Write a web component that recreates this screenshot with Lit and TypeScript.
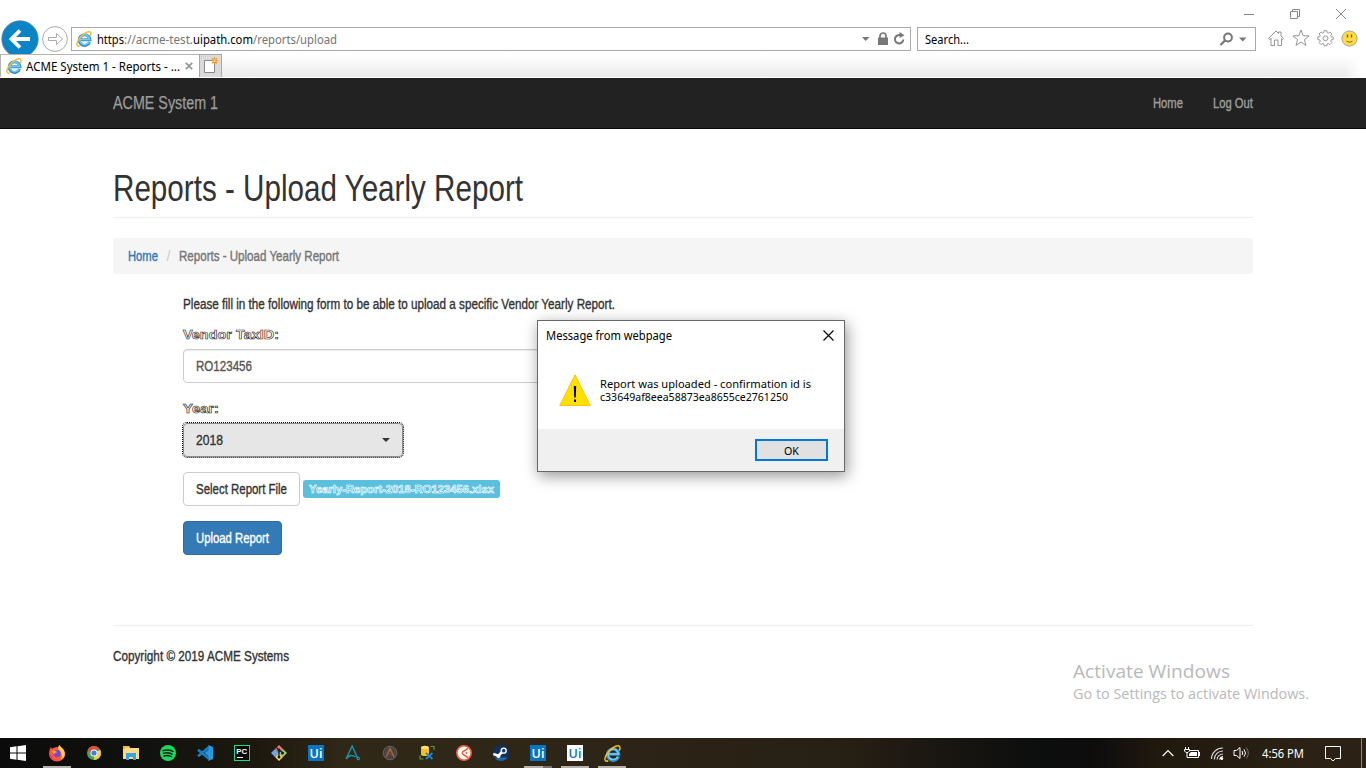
import { LitElement, html, css, svg } from "lit";
import { customElement, property } from "lit/decorators.js";

/** One line of text, squeezed or stretched horizontally to a given width. */
@customElement("fit-text")
class FitText extends LitElement {
  @property({ type: Number }) w = 0;
  static styles = css`
    :host { display: inline-block; white-space: pre; vertical-align: top; }
    .line { display: inline-block; transform-origin: 0 50%; }
  `;
  render() {
    return html`<span class="line"><slot></slot></span>`;
  }
  firstUpdated() {
    const line = this.renderRoot.querySelector(".line") as HTMLElement;
    const natural = line.getBoundingClientRect().width;
    this.style.width = `${this.w}px`;
    if (natural > 0) line.style.transform = `scaleX(${this.w / natural})`;
  }
}

const ieLogo = (size: number) => html`<svg width=${size} height=${size} viewBox="0 0 16 16">
  <path d="M13.600 10.900A5.300 5.300 0 1 1 13.900 8.700H4.500" fill="none" stroke="#2f8fd3" stroke-width="3"/>
  <path d="M13.100 10.900A4.900 4.900 0 1 1 13.600 8.500H4.500" fill="none" stroke="#7accf4" stroke-width="1.500"/>
  <path d="M4 14.800C1.500 16 .2 14.300 1.200 11.500 2.500 7.500 7 2.700 11 1.200c2.500-1 4.200-.4 4 1.800 0 .8-.3 1.600-.7 2.300" fill="none" stroke="#f3bd27" stroke-width="1.400"/>
</svg>`;

const uiLogo = (fg: string, bg: string) => html`<svg class="ui" width="16" height="16" viewBox="0 0 16 16">
  <rect width="16" height="16" fill=${bg}/>
  <text x="8" y="12.700" text-anchor="middle" font-family="Open Sans, sans-serif" font-weight="600" font-size="12.500" fill=${fg}>Ui</text>
</svg>`;

const apps = [
  { on: true, icon: html`<svg width="18" height="18" viewBox="0 0 18 18">
      <path d="M9 3C10 3.500 11 3 11.500 1c1 2 5.500 4 5.500 9a8 7.500 0 0 1-16 0C1 7 2 5 3 3l1 2c1-1 3-2 5-2Z" fill="#ff5a36"/>
      <path d="M11.500 1c.2 2 5 3.500 5.300 8.500a6 6 0 0 1-4 6c2-4 1-7-2-9.500C9.500 4.500 10 2.500 11.500 1Z" fill="#ffd43b"/>
      <path d="M1 9c1 6 5 8 9 7.500-4 0-6-2-6-4Z" fill="#f4276d"/>
      <circle cx="9" cy="9.500" r="3.700" fill="#7a46dd"/><path d="M4 7c2-1 4 0 5 1-1 1.500-3 1-3.500 2.500Z" fill="#ff9a2e"/></svg>` },
  { icon: html`<svg width="16" height="16" viewBox="0 0 16 16"><circle cx="8" cy="8" r="7" fill="#4aa35a"/>
      <path d="M8 8 14.200 4.700A7 7 0 0 1 8.200 15Z" fill="#f6cd45"/>
      <path d="M8 4.500h6.100a7 7 0 0 0-12.200 0L5 9.500Z" fill="#d9503f"/>
      <circle cx="8" cy="8" r="3.500" fill="#fff"/><circle cx="8" cy="8" r="2.600" fill="#3f7de0"/></svg>` },
  { icon: html`<svg width="16" height="16" viewBox="0 0 16 16"><path d="M0 1h6l1 2h9v11H0Z" fill="#fbdc85"/><path d="M0 1h6l1 1.500H1.500V4H0Z" fill="#efb526"/>
      <path d="M3 8h10v7h-3v-3H6v3H3Z" fill="#37a3df"/></svg>` },
  { icon: html`<svg width="16" height="16" viewBox="0 0 16 16"><circle cx="8" cy="8" r="8" fill="#1ed760"/>
      <path d="M3 5.600c3.500-1 7-.7 10 .8M3.500 8.300c3-.8 6-.5 8.500.8M4 10.900c2.500-.6 5-.4 7.200.8" fill="none" stroke="#14231a" stroke-width="1.500" stroke-linecap="round"/></svg>` },
  { icon: html`<svg width="16" height="16" viewBox="0 0 16 16"><path d="M11.500 2.500 1 11.300M11.500 13.500 1 4.700" stroke="#147fc6" stroke-width="2.600"/>
      <path d="M11.300 0 16 2v12l-4.700 2v-4.700L7.500 8l3.800-3.300Z" fill="#2799de"/></svg>` },
  { icon: html`<svg width="16" height="16" viewBox="0 0 16 16"><rect x=".5" y=".5" width="15" height="15" fill="#050706" stroke="#21d789"/>
      <text x="2.200" y="9" font-family="Liberation Sans, sans-serif" font-weight="700" font-size="7.800" fill="#fff">PC</text><path d="M3 12.500h6" stroke="#fff"/></svg>` },
  { icon: html`<svg width="16" height="16" viewBox="0 0 16 16"><path d="m8 0 4 4-4 4-4-4Z" fill="#f0767b"/><path d="m4 4 4 4-4 4-4-4Z" fill="#6ca6ea"/>
      <path d="m12 4 4 4-4 4-4-4Z" fill="#94cf78"/><path d="m8 8 4 4-4 4-4-4Z" fill="#f5d779"/>
      <path d="M5.500 2.500 8 5v7.500M8 5l4 3" stroke="#241b10" stroke-width="1.300" fill="none"/><circle cx="8" cy="5" r="1.500" fill="#241b10"/><circle cx="8" cy="12" r="1.500" fill="#241b10"/><circle cx="11.500" cy="8" r="1.500" fill="#241b10"/></svg>` },
  { icon: uiLogo("#fff", "#0a74c4") },
  { icon: html`<svg width="16" height="16" viewBox="0 0 16 16"><path d="M1 14 7.200 1 12.500 13M1 14c3-4 6-4.500 9.500-2" fill="none" stroke="#1d91ac" stroke-width="1.500"/><circle cx="13.300" cy="13.500" r="1.300" fill="none" stroke="#24b5d4"/></svg>` },
  { icon: html`<svg width="16" height="16" viewBox="0 0 16 16"><circle cx="8" cy="8" r="6.800" fill="#474544" stroke="#67625f"/>
      <path d="m4 12 4-8.500 4 8.500" fill="none" stroke="#bd6a35" stroke-width="1.300"/><path d="M4 11.500c2-3 4-3 6-2" fill="none" stroke="#a33c3c"/></svg>` },
  { icon: html`<svg width="16" height="16" viewBox="0 0 16 16"><path d="M2 2.500v7c0 2 8 2 8 0v-7" fill="#f7bd28"/><ellipse cx="6" cy="2.500" rx="4" ry="1.700" fill="#ffdf70"/>
      <path d="M11.500 1.500H15V5M1 10.500V14h3.500" fill="none" stroke="#4f9d48" stroke-width="1.200"/><path d="m7 8 6.500 6M13.500 8 7 14" stroke="#2185d5" stroke-width="1.800"/></svg>` },
  { icon: html`<svg width="16" height="16" viewBox="0 0 16 16"><circle cx="8" cy="8" r="7.200" fill="#fff" stroke="#ef5b32" stroke-width="1.600"/>
      <path d="M12 3.500 7 6.500a2 2 0 0 0 0 3l5 3" fill="none" stroke="#ef5b32" stroke-width="1.500"/><circle cx="10.500" cy="8" r=".9" fill="#ef5b32"/></svg>` },
  { icon: html`<svg width="16" height="16" viewBox="0 0 16 16"><circle cx="8" cy="8" r="8" fill="#12305f"/><path d="M1.500 12.500a8 8 0 0 0 13 0Z" fill="#1c6ba7"/>
      <path d="m.3 9 5 1.800L9.500 6.500" stroke="#fff" stroke-width="2.600" fill="none"/><circle cx="10.700" cy="5.700" r="2.500" fill="#263e67" stroke="#fff" stroke-width="1.300"/><circle cx="5.500" cy="11" r="2" fill="#fff"/></svg>` },
  { on: true, stacked: true, icon: uiLogo("#fff", "#0a74c4") },
  { on: true, icon: uiLogo("#0a74c4", "#fff") },
  { on: true, icon: ieLogo(17) },
] as { on?: boolean; stacked?: boolean; icon: unknown }[];

@customElement("app-root")
class AppRoot extends LitElement {
  static styles = css`
    :host {
      display: flex; flex-direction: column; position: relative; width: 1366px; height: 768px; overflow: hidden;
      background: #fff; box-sizing: border-box;
      font: 14px/20px "Liberation Sans Narrow", "Liberation Sans", Arial, sans-serif; color: #333;
    }
    *, *::before { box-sizing: border-box; }
    svg { display: block; flex: none; }

    .title { display: flex; justify-content: flex-end; align-items: center; height: 27px; padding: 1px 19px 0 0; gap: 34px; }
    .bar { display: flex; height: 27px; padding-left: 1px; font: 12px/23px "Noto Sans", sans-serif; color: #000; }
    .back { margin-top: -7px; }
    .fwd { margin: -2px 2px 0 3px; }
    .box { display: flex; align-items: center; height: 24px; border: 1px solid #a9a9a9; }
    .url { width: 840px; padding: 0 4px; }
    .url .txt { flex: 1; margin-left: 5px; display: flex; }
    .dim { color: #757575; }
    .find { width: 339px; margin-left: 6px; padding: 0 8px 0 7px; }
    .find fit-text { margin-right: auto; }
    .tools { display: flex; align-items: center; height: 22px; margin-left: 11px; gap: 7px; }

    .tabs { display: flex; height: 24px; font: 12px/23px "Noto Sans", sans-serif; color: #000; background: linear-gradient(#fff 5%, #ececec 90%); border-bottom: 1px solid #fff; }
    .tab { display: flex; align-items: center; width: 199px; background: #fff; border: 1px solid #b4b4b4; border-width: 1px 0 0 1px; padding-left: 5px; }
    .tab fit-text { margin: 0 5px 0 4px; }
    .new { width: 23px; background: #dadada; border: 1px solid #a8a8a8; border-bottom: 0; padding: 2px 0 0 4px; }
    .fade { margin-left: auto; width: 22px; background: linear-gradient(90deg, rgba(255,255,255,0), #fff 80%); }

    .navbar { display: flex; height: 51px; background: #222; border-bottom: 1px solid #080808; color: #9d9d9d; padding: 15px 113px; }
    .brand { font-size: 18px; margin-right: auto; -webkit-text-stroke: .25px; }
    .navbar .link { margin-left: 30px; -webkit-text-stroke: .4px; }

    .page { flex: 1; width: 1140px; margin-left: 113px; }
    .head { margin: 39px 0 20px; height: 50px; padding-top: 2px; border-bottom: 1px solid #eee; font-size: 36px; line-height: 38px; }
    .crumbs { display: flex; height: 36px; padding: 8px 15px; background: #f5f5f5; border-radius: 4px; color: #777; -webkit-text-stroke: .4px; }
    .home { color: #337ab7; }
    .sep { width: 21px; text-align: center; color: #ccc; -webkit-text-stroke: 0; }
    .form { display: flex; flex-direction: column; align-items: flex-start; margin: 20px 0 0 70px; width: 1000px; -webkit-text-stroke: .35px; }
    .label { height: 20px; margin: 10px 0 5px; font: 700 13.500px/21px "Liberation Sans", sans-serif; color: #fff; -webkit-text-stroke: .6px #222; }
    .input { width: 570px; height: 34px; padding: 6px 12px; border: 1px solid #ccc; border-radius: 4px; color: #555; box-shadow: inset 0 1px 1px rgba(0,0,0,.075); margin-bottom: 5px; }
    .select { display: flex; justify-content: space-between; align-items: center; width: 220px; height: 34px; padding: 0 12px; background: #e6e6e6; border: 1px solid #8c8c8c; border-radius: 4px; outline: 1px dotted #000; }
    .row { display: flex; align-items: center; gap: 3px; margin: 15px 0; }
    .btn { height: 34px; padding: 6px 12px; border: 1px solid #ccc; border-radius: 4px; white-space: nowrap; }
    .badge { height: 18px; padding: 0 6px; background: #5bc0de; border-radius: 3px; font: 700 10.500px/18px "Liberation Sans", sans-serif; color: #5bc0de; -webkit-text-stroke: .6px #fff; }
    .go { background: #337ab7; border-color: #2e6da4; color: #fff; }
    .foot { margin-top: 70px; border-top: 1px solid #eee; padding-top: 20px; -webkit-text-stroke: .35px; }

    .dialog { position: absolute; left: 537px; top: 320px; width: 308px; height: 152px; display: flex; flex-direction: column; background: #fff; border: 1px solid #686868; box-shadow: 2px 4px 14px rgba(0,0,0,.42); font: 11.500px/13px "Noto Sans", sans-serif; color: #000; }
    .dtitle { display: flex; justify-content: space-between; align-items: center; height: 28px; padding: 1px 10px 0 8px; font-size: 12px; }
    .msg { flex: 1; display: flex; padding: 25px 0 0 21px; gap: 9px; }
    .lines { display: flex; flex-direction: column; padding-top: 3px; }
    .actions { display: flex; justify-content: flex-end; height: 42px; background: #f0f0f0; padding: 10px 16px 0 0; }
    .ok { display: flex; justify-content: center; width: 73px; height: 22px; border: 2px solid #0078d7; background: #e1e1e1; line-height: 19px; }

    .mark { position: absolute; left: 1073px; top: 659px; display: flex; flex-direction: column; color: #b9b9b9; font: 19px/24px "Open Sans", sans-serif; }
    .mark .sub { font-size: 14px; line-height: 22px; }

    .task { display: flex; height: 30px; background: linear-gradient(90deg, #0b0b0b 0, #11110f 150px, #1d190f 260px, #302817 345px, #2c2416 640px, #261f14 850px, #0d0e0e 1030px, #0c0c0c 1090px, #20190e 1160px, #2b2115 1300px, #2b2115 100%); color: #fff; font: 12px/29px "Noto Sans", sans-serif; }
    .start { width: 38.500px; padding: 7px 0 0 10px; }
    .app { display: flex; align-items: center; justify-content: center; width: 37px; position: relative; }
    .app.on::before { content: ""; position: absolute; left: 4.500px; right: 4.500px; bottom: 0; height: 2px; background: #b5b2ad; }
    .app.stacked::before { background: linear-gradient(90deg, #b5b2ad 19px, #777269 19px); }
    .tray { display: flex; align-items: center; margin-left: auto; }
    .cell { display: flex; justify-content: center; }
    .c24 { width: 24px; } .c25 { width: 25px; }
    .tray fit-text { margin: 0 17px 0 9px; }
    .edge { width: 5px; height: 30px; border-left: 1px solid #8b857b; margin-left: 16px; }
  `;

  render() {
    return html`
      <div class="title">
        <svg width="12" height="12" viewBox="0 0 12 12"><path d="M1 6.500h10" stroke="#888"/></svg>
        <svg width="12" height="12" viewBox="0 0 12 12"><path d="M1.500 3.500h7v7h-7ZM3.500 3.500v-2h7v7h-2" fill="none" stroke="#888"/></svg>
        <svg width="12" height="12" viewBox="0 0 12 12"><path d="m1 1 10 10M11 1 1 11" stroke="#888"/></svg>
      </div>
      <div class="bar">
        <svg class="back" width="38" height="34" viewBox="0 0 38 34"><circle cx="19" cy="19" r="18.200" fill="#0b84c5" stroke="#5d7f92" stroke-width=".8"/>
          <path d="M29 19H11.500M19 10.500 10.500 19l8.500 8.500" fill="none" stroke="#fff" stroke-width="3.800"/></svg>
        <svg class="fwd" width="27" height="28" viewBox="0 0 27 28"><circle cx="13" cy="14" r="12.400" fill="#fff" stroke="#a9a9a9"/>
          <path d="M6.500 12.500h8v-4l6 5.500-6 5.500v-4h-8Z" fill="none" stroke="#a9a9a9"/></svg>
        <div class="box url">${ieLogo(16)}
          <div class="txt"><fit-text w="27">https</fit-text><fit-text class="dim" w="69">://acme-test.</fit-text><fit-text w="60">uipath.com</fit-text><fit-text class="dim" w="84">/reports/upload</fit-text></div>
          <svg width="44" height="16" viewBox="0 0 44 16"><path d="M0 6h7.500L3.700 10Z" fill="#777"/>
            <path d="M18 7V5a3 3 0 0 1 6 0v2" fill="none" stroke="#777" stroke-width="1.700"/><rect x="16" y="6.500" width="10" height="7.500" fill="#777"/>
            <path d="M39.500 4.800A4.200 4.200 0 1 0 41.300 8.500" fill="none" stroke="#777" stroke-width="2"/><path d="M37.500 1l5 3.200-4.800 2.800Z" fill="#777"/></svg>
        </div>
        <div class="box find"><fit-text w="44">Search...</fit-text>
          <svg width="28" height="14" viewBox="0 0 28 14"><circle cx="9" cy="5.500" r="3.900" fill="none" stroke="#777" stroke-width="2"/><path d="M6 8.500 1.500 13" stroke="#777" stroke-width="2.300"/><path d="M20 5.500h7.500L23.700 9.500Z" fill="#777"/></svg>
        </div>
        <div class="tools">
          <svg width="18" height="18" viewBox="0 0 18 18"><path d="M1.500 9.500 9 2l2.500 2.500V3h2.500v4l2.500 2.500-1 1-1-1V16.500H11V11H7.500v5.500H4V9.500l-1.200 1.200Z" fill="none" stroke="#888" stroke-width=".9"/></svg>
          <svg width="18" height="18" viewBox="0 0 18 18"><path d="m9 1 2.100 5.700 6 .2-4.700 3.700 1.600 5.800L9 13l-5 3.400 1.600-5.800L.9 6.900l6-.2Z" fill="none" stroke="#888" stroke-width=".9"/></svg>
          <svg width="17" height="18" viewBox="0 0 18 18"><path d="M7.500 1.300h3l.3 2.100 1.200.5 1.700-1.300 2.100 2.100-1.300 1.700.5 1.200 2.100.3v2.800l-2.100.3-.5 1.200 1.300 1.700-2.100 2.100-1.700-1.300-1.200.5-.3 2.100h-3l-.3-2.100-1.200-.5-1.700 1.300-2.100-2.100L3.500 12.200 3 11l-2.100-.3V7.900L3 7.600l.5-1.200-1.300-1.700 2.100-2.100L6 3.900l1.200-.5Z" fill="none" stroke="#888" stroke-width=".9"/><circle cx="9" cy="9.300" r="2.600" fill="none" stroke="#888" stroke-width=".9"/></svg>
          <svg width="17" height="17" viewBox="0 0 17 17"><circle cx="8.500" cy="8.500" r="7.600" fill="#ffdc45" stroke="#999" stroke-width=".9"/><path d="M6.500 4.500v3M10.500 4.500v3" stroke="#7a5b10" stroke-width="1.400"/><path d="M5.500 11c2 1.500 4 1.500 6 0" fill="none" stroke="#8a6812"/></svg>
        </div>
      </div>
      <div class="tabs">
        <div class="tab">${ieLogo(16)}<fit-text w="154">ACME System 1 - Reports - ...</fit-text>
          <svg width="8" height="8" viewBox="0 0 8 8"><path d="m.8.800 6.400 6.400M7.200.8.800 7.200" stroke="#999" stroke-width="1.900"/></svg></div>
        <div class="new"><svg width="15" height="17" viewBox="0 0 15 17"><path d="M.5 3.500h10v12H.5Z" fill="#fff" stroke="#8a8a8a"/><path d="M10.500.3v7M7 3.800h7M8 1.300l5 5M13 1.300l-5 5" stroke="#e8921c" stroke-width="1.100"/><circle cx="10.500" cy="3.800" r="1.400" fill="#ffd36a"/></svg></div>
        <div class="fade"></div>
      </div>

      <div class="navbar"><fit-text class="brand" w="105">ACME System 1</fit-text><fit-text class="link" w="30">Home</fit-text><fit-text class="link" w="40">Log Out</fit-text></div>

      <div class="page">
        <div class="head"><fit-text w="410">Reports - Upload Yearly Report</fit-text></div>
        <div class="crumbs"><fit-text class="home" w="30">Home</fit-text><span class="sep">/</span><fit-text w="160">Reports - Upload Yearly Report</fit-text></div>
        <div class="form">
          <fit-text w="432">Please fill in the following form to be able to upload a specific Vendor Yearly Report.</fit-text>
          <div class="label"><fit-text w="96">Vendor TaxID:</fit-text></div>
          <div class="input"><fit-text w="56">RO123456</fit-text></div>
          <div class="label"><fit-text w="36">Year:</fit-text></div>
          <div class="select"><fit-text w="27">2018</fit-text><svg width="8" height="4" viewBox="0 0 8 4"><path d="M0 0h8L4 4Z" fill="#333"/></svg></div>
          <div class="row"><div class="btn"><fit-text w="91">Select Report File</fit-text></div><div class="badge"><fit-text w="185">Yearly-Report-2018-RO123456.xlsx</fit-text></div></div>
          <div class="btn go"><fit-text w="73">Upload Report</fit-text></div>
        </div>
        <div class="foot"><fit-text w="176">Copyright © 2019 ACME Systems</fit-text></div>
      </div>

      <div class="task">
        <div class="start"><svg width="16" height="16" viewBox="0 0 16 16"><path d="M0 2.300 6.500 1.300v6.200H0ZM7.500 1.200 16 0v7.500H7.500ZM0 8.500h6.500v6.200L0 13.700ZM7.500 8.500H16V16l-8.500-1.200Z" fill="#fff"/></svg></div>
        ${apps.map((a) => html`<div class="app ${a.on ? "on" : ""} ${a.stacked ? "stacked" : ""}">${a.icon}</div>`)}
        <div class="tray">
          <div class="cell c24"><svg width="12" height="8" viewBox="0 0 12 8"><path d="m.7 7 5.300-5.300L11.300 7" fill="none" stroke="#fff" stroke-width="1.200"/></svg></div>
          <div class="cell c24"><svg width="17" height="13" viewBox="0 0 17 13"><path d="M5.500 3.500h9v7h-9" fill="none" stroke="#fff"/><path d="M7 5h6v4H5V7Z" fill="#fff"/><path d="M15.500 5v4" stroke="#fff"/><path d="M1.500 0v2.500M4.500 0v2.500M.5 2.500h5v1.500L4 5.500H2L.5 4ZM3 5.500V10.500h3" fill="none" stroke="#fff"/></svg></div>
          <div class="cell c25"><svg width="14" height="14" viewBox="0 0 14 14"><path d="M1.500 13A11 11 0 0 1 13 2M4.300 13.500A8.500 8.500 0 0 1 13 5M7 13.500A6 6 0 0 1 13 8" fill="none" stroke="#ddd" stroke-width="1.100"/><path d="M9.500 13.500a3.500 3.500 0 0 1 3.500-3" fill="none" stroke="#fff"/><circle cx="11.700" cy="12.500" r="1.500" fill="#fff"/></svg></div>
          <div class="cell c24"><svg width="17" height="14" viewBox="0 0 17 14"><path d="M1 4.500h2.500L7 1.500v11L3.500 9.500H1Z" fill="none" stroke="#fff"/><path d="M9 5q1.500 2 0 4M11 3.300q3 3.700 0 7.400" fill="none" stroke="#fff"/><path d="M13.300 1.500q4 5.500 0 11" fill="none" stroke="#77726b"/></svg></div>
          <fit-text w="42">4:56 PM</fit-text>
          <div class="cell c24"><svg width="16" height="17" viewBox="0 0 16 17"><path d="M.5 1.500h15v12h-5L8 16l-2.500-2.500h-5Z" fill="none" stroke="#fff"/></svg></div>
          <div class="edge"></div>
        </div>
      </div>

      <div class="mark"><fit-text w="157">Activate Windows</fit-text><fit-text class="sub" w="236">Go to Settings to activate Windows.</fit-text></div>

      <div class="dialog">
        <div class="dtitle"><fit-text w="126">Message from webpage</fit-text>
          <svg width="11" height="11" viewBox="0 0 11 11"><path d="m.5.500 10 10M10.500.500l-10 10" stroke="#000" stroke-width="1.100"/></svg></div>
        <div class="msg">
          <svg width="32" height="32" viewBox="0 0 32 32"><path d="M16 .8 31.300 31.500H.7Z" fill="#ffe100" stroke="#ffc20e"/><path d="M14.800 12h2.400l-.4 11.500h-1.600ZM15 25.500h2V28h-2Z" fill="#000"/></svg>
          <div class="lines"><fit-text w="211">Report was uploaded - confirmation id is</fit-text><fit-text w="188">c33649af8eea58873ea8655ce2761250</fit-text></div>
        </div>
        <div class="actions"><div class="ok"><fit-text w="15">OK</fit-text></div></div>
      </div>
    `;
  }
}
